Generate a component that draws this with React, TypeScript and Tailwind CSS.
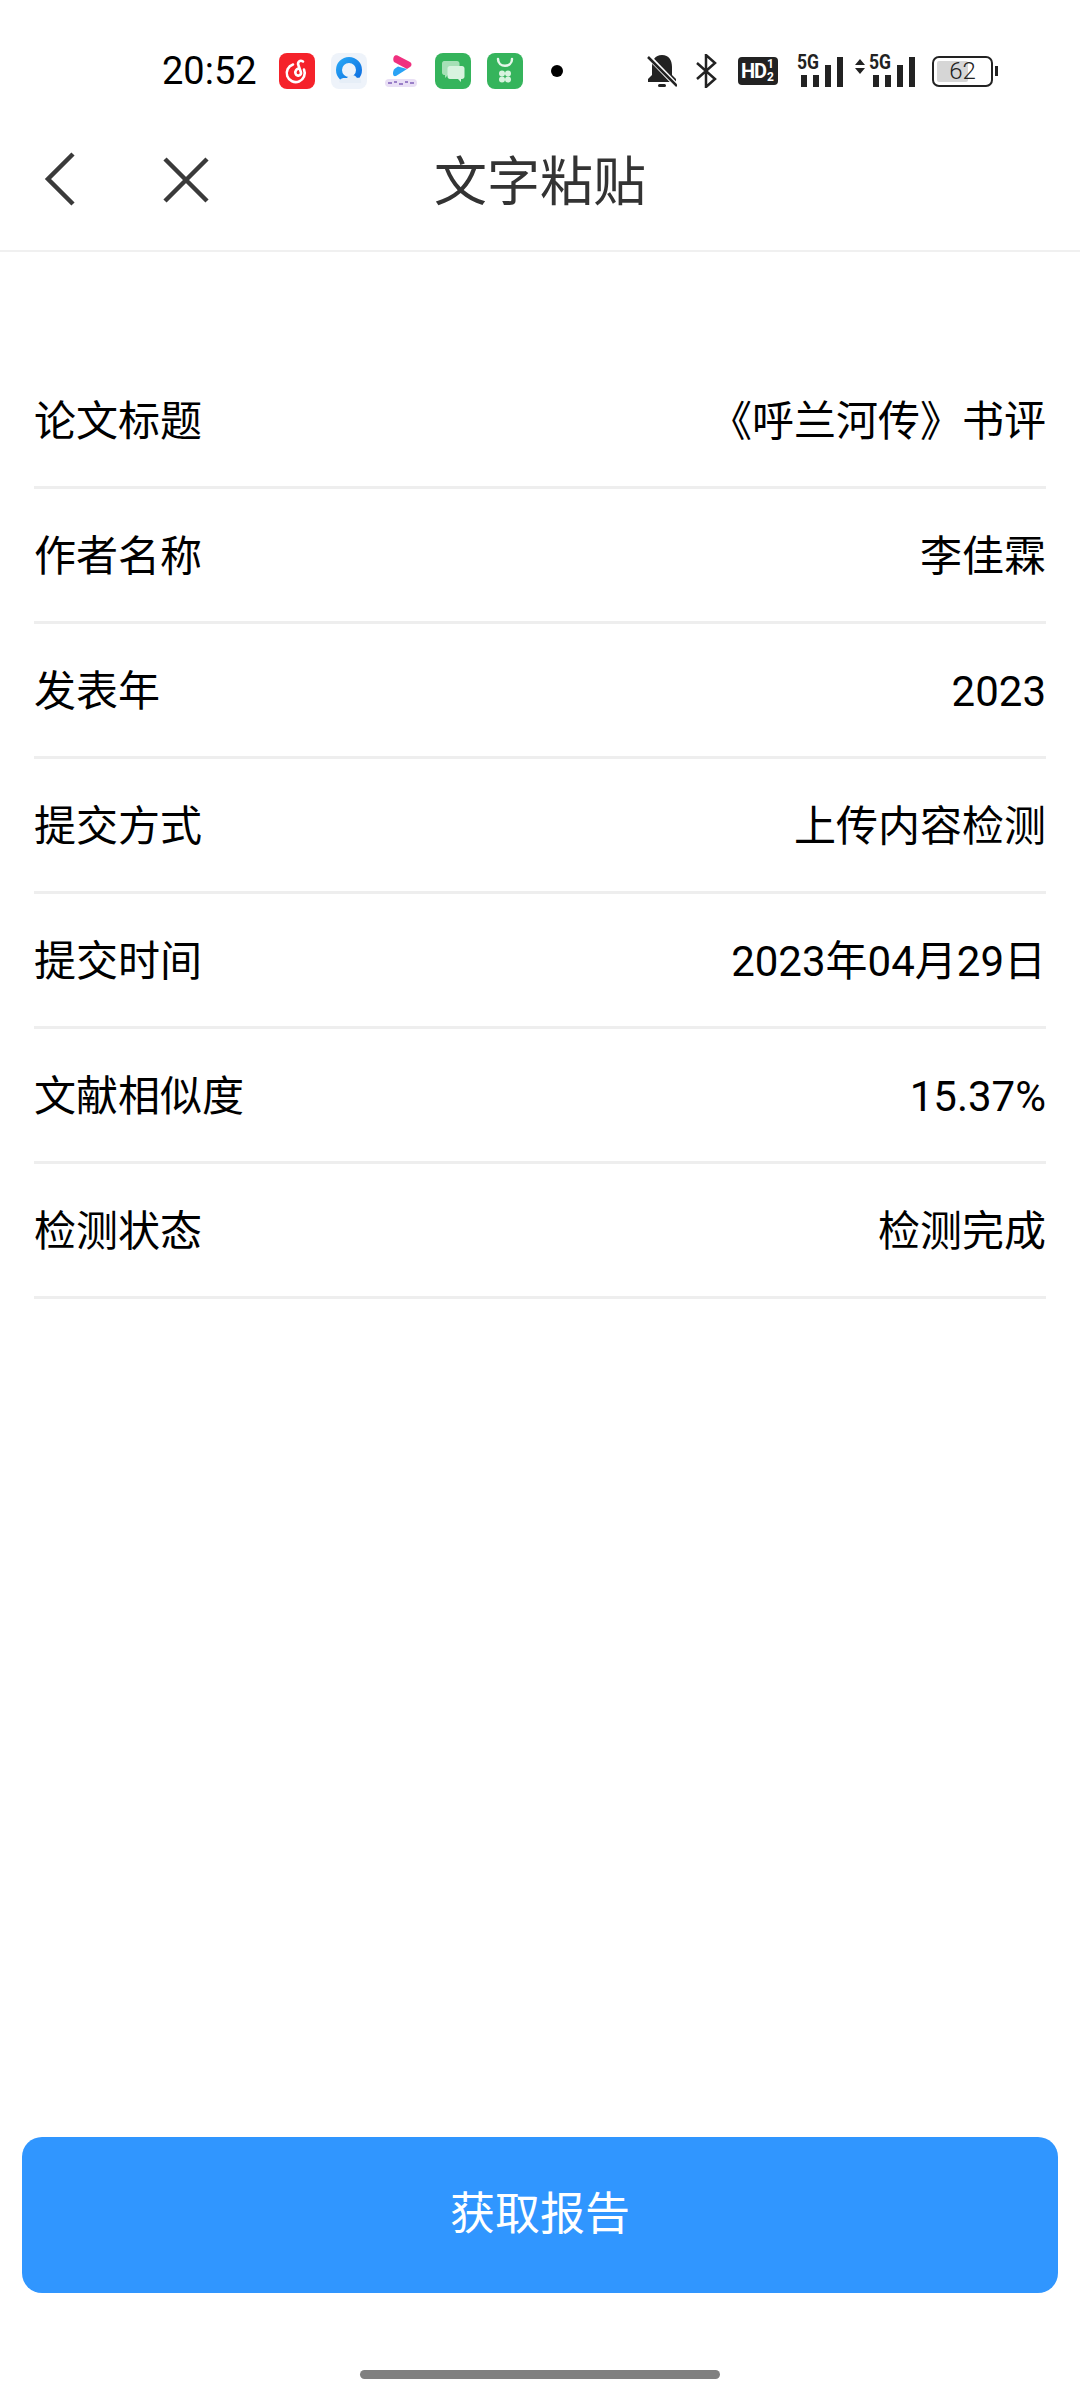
const rows = [
  { label: '论文标题', value: '《呼兰河传》书评' },
  { label: '作者名称', value: '李佳霖' },
  { label: '发表年', value: '2023' },
  { label: '提交方式', value: '上传内容检测' },
  { label: '提交时间', value: '2023年04月29日' },
  { label: '文献相似度', value: '15.37%' },
  { label: '检测状态', value: '检测完成' },
];

const font = { fontFamily: 'Roboto, "Noto Sans CJK SC", sans-serif' };

function AppIcons() {
  return (
    <div className="flex items-center gap-[16px]">
      <svg width="36" height="36" viewBox="0 0 36 36">
        <rect width="36" height="36" rx="8" fill="#f5222a" />
        <path d="M14 11.500a9 9 0 1 0 11 5" fill="none" stroke="#fff" strokeWidth="2.600" strokeLinecap="round" />
        <path d="M24 8.500c-3-2-6 .5-4.500 4l2.500 7c.8 3-4.500 4.500-5.500 1-.7-2.500 1-4.500 3-5" fill="none" stroke="#fff" strokeWidth="2.600" strokeLinecap="round" />
      </svg>
      <svg width="36" height="36" viewBox="0 0 36 36">
        <defs>
          <linearGradient id="qq" x1="0" y1="0" x2="1" y2="1">
            <stop offset="0" stopColor="#27a4f4" />
            <stop offset="1" stopColor="#0f6fe0" />
          </linearGradient>
        </defs>
        <rect width="36" height="36" rx="8" fill="#eef3fa" />
        <circle cx="18" cy="17" r="10" fill="none" stroke="url(#qq)" strokeWidth="6" />
        <path d="M8 28c2-4 7-3 8-3 2-4 8-4 10 0 3-1 5 2 4 5H10c-1 0-2-1-2-2z" fill="#e6eef7" />
      </svg>
      <svg width="36" height="36" viewBox="0 0 36 36">
        <path d="M11 3.500c1-1.500 2.500-1.500 4-.8l12 6.300c2 1 2 4 0 5L24 16 11 9c-1-1.500-1-4 0-5.500z" fill="#f0307f" />
        <path d="M24 16l-11 7c-2 .5-3-.5-3-2.500 0-2 .5-4 2-5l3-2z" fill="#2aa3f5" />
        <rect x="2" y="26" width="32" height="8" rx="4" fill="#e9dff5" />
        <path d="M5 30h4M11 29h3M16 31h4M22 29h3M27 30h4" stroke="#9a80c8" strokeWidth="2" />
      </svg>
      <svg width="36" height="36" viewBox="0 0 36 36">
        <rect width="36" height="36" rx="8" fill="#35b45c" />
        <path d="M9 8h13c1.500 0 2.500 1 2.500 2.500v9c0 1.500-1 2.500-2.500 2.500H13l-3 3v-3H9c-1 0-2-1-2-2.500v-9C7 9 8 8 9 8z" fill="#a6e0b6" />
        <path d="M15 13h12c1.500 0 2.500 1 2.500 2.500v8c0 1.500-1 2.500-2.500 2.500h-1v3l-3-3h-8c-1.500 0-2.500-1-2.500-2.500v-8c0-1.500 1-2.500 2.500-2.500z" fill="#d8f3df" />
      </svg>
      <svg width="36" height="36" viewBox="0 0 36 36">
        <rect width="36" height="36" rx="8" fill="#35b45c" />
        <path d="M11 6c0 9 14 9 14 0" fill="none" stroke="#e6f7ea" strokeWidth="2.500" strokeLinecap="round" />
        <circle cx="15" cy="20.500" r="3" fill="#d8f3df" />
        <circle cx="21" cy="20.500" r="3" fill="#d8f3df" />
        <circle cx="15" cy="26.500" r="3" fill="#d8f3df" />
        <circle cx="21" cy="26.500" r="3" fill="#d8f3df" />
      </svg>
      <div className="ml-[12px] h-[12px] w-[12px] rounded-full bg-black" />
    </div>
  );
}

function Signal({ arrows }: { arrows?: boolean }) {
  return (
    <svg width={arrows ? 60 : 46} height="46" viewBox={arrows ? '-14 -6 60 46' : '0 -6 46 46'}>
      {arrows && <path d="M-14 11l5-6 5 6zM-14 14l5 6 5-6z" fill="#222" />}
      <text x="0" y="15" fontSize="20" fontWeight="700" fontFamily="Roboto, sans-serif" fill="#222" textLength="22" lengthAdjust="spacingAndGlyphs">5G</text>
      <rect x="4" y="21" width="6" height="12" fill="#222" />
      <rect x="16" y="21" width="6" height="12" fill="#222" />
      <rect x="28" y="11" width="6" height="22" fill="#222" />
      <rect x="40" y="3" width="6" height="30" fill="#222" />
    </svg>
  );
}

function StatusIcons() {
  return (
    <div className="flex items-center">
      <svg width="30" height="34" viewBox="0 0 30 34">
        <path d="M15 1c-7 0-10 5-10 12v8l-4 4v3h28v-3l-4-4v-8C25 6 22 1 15 1z" fill="#222" />
        <rect x="11" y="30" width="8" height="3" rx="1.500" fill="#222" />
        <path d="M0 1l30 31" stroke="#fff" strokeWidth="5" />
        <path d="M1 3l29 29" stroke="#222" strokeWidth="2.500" />
      </svg>
      <svg className="ml-[19px]" width="21" height="34" viewBox="0 0 21 34">
        <path d="M1 9l18 16-9 8V1l9 8L1 25" fill="none" stroke="#222" strokeWidth="2.500" />
      </svg>
      <div className="relative ml-[21px] h-[28px] w-[40px] rounded-[4px] bg-[#222]">
        <span className="absolute left-[3px] top-[4px] text-[20px] leading-[20px] font-bold tracking-[-1px] text-white">HD</span>
        <span className="absolute left-[29px] top-[1px] text-[12px] leading-[12px] font-bold text-white">1</span>
        <span className="absolute left-[29px] top-[14px] text-[12px] leading-[12px] font-bold text-white">2</span>
      </div>
      <div className="ml-[19px] flex"><Signal /></div>
      <div className="ml-[12px] flex"><Signal arrows /></div>
      <div className="relative ml-[17px] h-[31px] w-[61px] rounded-[7px] border-2 border-[#222] p-[3px]">
        <div className="h-full w-[60%] rounded-[2px] bg-[#d6d6d6]" />
        <span className="absolute inset-0 flex items-center justify-center text-[24px] leading-none font-light text-[#222]">62</span>
      </div>
      <div className="ml-[2px] h-[10px] w-[3px] bg-[#222]" />
    </div>
  );
}

export default function App() {
  return (
    <div className="flex h-[2400px] w-[1080px] flex-col bg-white" style={font}>
      {/* status bar */}
      <div className="flex h-[142px] items-center pl-[162px]">
        <span className="w-[117px] text-[38px] leading-none text-black">20:52</span>
        <AppIcons />
        <div className="ml-[84px]"><StatusIcons /></div>
      </div>

      {/* header */}
      <div className="relative flex h-[110px] items-center justify-center border-b-2 border-[#f0f0f0]">
        <svg className="absolute left-[44px] top-[10px]" width="34" height="54" viewBox="0 0 34 54">
          <path d="M29 2L4 27l25 25" fill="none" stroke="#3a3a3a" strokeWidth="4.500" />
        </svg>
        <svg className="absolute left-[162px] top-[14px]" width="48" height="48" viewBox="0 0 48 48">
          <path d="M3 3l42 42M45 3L3 45" fill="none" stroke="#3a3a3a" strokeWidth="4.500" />
        </svg>
        <span className="mb-[26px] text-[53px] leading-none font-normal text-[#333]">文字粘贴</span>
      </div>

      {/* info rows */}
      <div className="mt-[102px] flex flex-col px-[34px]">
        {rows.map((row) => (
          <div key={row.label} className="flex h-[135px] items-center justify-between border-b-[3px] border-[#eeeeee] pt-[2px] text-[42px] font-normal text-black">
            <span>{row.label}</span>
            <span>{row.value}</span>
          </div>
        ))}
      </div>

      {/* action */}
      <div className="mt-auto px-[22px]">
        <button className="flex h-[156px] w-full items-center justify-center rounded-[20px] bg-[#3096ff] text-[45px] font-normal text-white">获取报告</button>
      </div>
      <div className="mx-auto mt-[77px] mb-[21px] h-[9px] w-[360px] rounded-full bg-[#808080]" />
    </div>
  );
}
